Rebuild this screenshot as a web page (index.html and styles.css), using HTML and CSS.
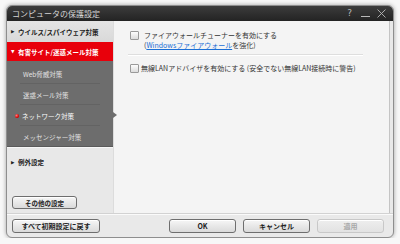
FILE: index.html
```html
<!DOCTYPE html>
<html lang="ja">
<head>
  <meta charset="UTF-8">
  <title>コンピュータの保護設定</title>
  <link rel="stylesheet" href="styles.css">
</head>
<body>
  <div class="window">
    <div class="titlebar">
      <span class="title">コンピュータの保護設定</span>
      <div class="controls">
        <span class="help">?</span>
        <svg class="ctl" width="9" height="9" viewBox="0 0 9 9"><line x1="0" y1="7.5" x2="9" y2="7.5" stroke="#b8b8b8" stroke-width="1"/></svg>
        <svg class="ctl" width="9" height="9" viewBox="0 0 9 9"><path d="M0.5 0.5 L8.5 8.5 M8.5 0.5 L0.5 8.5" stroke="#b8b8b8" stroke-width="0.9" fill="none"/></svg>
      </div>
    </div>

    <div class="main">
      <div class="sidebar">
        <div class="menu-item top"><span class="tri">&#9654;</span>ウイルス/スパイウェア対策</div>
        <div class="menu-item open"><span class="tri">&#9660;</span>有害サイト/迷惑メール対策</div>
        <div class="submenu">
          <div class="sub-item">Web脅威対策</div>
          <div class="sub-item">迷惑メール対策</div>
          <div class="sub-item selected"><span class="dot"></span>ネットワーク対策</div>
          <div class="sub-item last">メッセンジャー対策</div>
        </div>
        <div class="menu-item plain"><span class="tri">&#9654;</span>例外設定</div>
        <div class="sidebar-bottom">
          <button class="btn btn-small">その他の設定</button>
        </div>
      </div>

      <div class="content">
        <div class="option">
          <span class="checkbox"></span>
          <div class="option-text">
            ファイアウォールチューナーを有効にする<br>
            (<a href="#">Windowsファイアウォール</a>を強化)
          </div>
        </div>
        <div class="divider"></div>
        <div class="option tight">
          <span class="checkbox"></span>
          <div class="option-text">無線LANアドバイザを有効にする (安全でない無線LAN接続時に警告)</div>
        </div>
      </div>
    </div>

    <div class="footer">
      <button class="btn btn-reset">すべて初期設定に戻す</button>
      <div class="spacer"></div>
      <button class="btn btn-dialog">OK</button>
      <button class="btn btn-dialog">キャンセル</button>
      <button class="btn btn-dialog disabled">適用</button>
    </div>
  </div>
</body>
</html>
```

FILE: styles.css
```css
body {
  margin: 0;
  background-color: #f7f7f7;
  font-family: "Noto Sans CJK JP", "Liberation Sans", sans-serif;
}
.window {
  margin: 5px 0 0 6px;
  width: 386px;
  height: 231px;
  border: 1px solid #8e8e8e;
  border-radius: 6px;
  background-color: #e9e9e9;
  box-shadow: 0 0 4px rgba(0, 0, 0, 0.35);
  overflow: hidden;
  display: flex;
  flex-direction: column;
}
.titlebar {
  height: 15px;
  flex: none;
  background: linear-gradient(#3c3c3c, #232323);
  display: flex;
  align-items: center;
  padding-left: 5px;
}
.title {
  color: #d4d4d4;
  font-size: 8px;
  line-height: 1;
}
.controls {
  margin-left: auto;
  display: flex;
  align-items: center;
  gap: 7px;
  margin-right: 7px;
}
.help {
  color: #b8b8b8;
  font-family: "DejaVu Sans", sans-serif;
  font-size: 9px;
  line-height: 1;
  margin-right: 2px;
}
.ctl {
  display: block;
}
.main {
  height: 192px;
  flex: none;
  display: flex;
}
.sidebar {
  width: 106px;
  flex: none;
  display: flex;
  flex-direction: column;
  background-color: #e8e8e8;
  border-right: 1px solid #dcdcdc;
}
.menu-item {
  display: flex;
  align-items: center;
  font-size: 6.5px;
  font-weight: bold;
  color: #222;
  padding-left: 4px;
}
.menu-item .tri {
  font-family: "DejaVu Sans", sans-serif;
  font-size: 4.5px;
  width: 7px;
}
.menu-item.top {
  height: 21px;
  background: linear-gradient(#e4e4e4, #d9d9d9);
}
.menu-item.open {
  height: 19px;
  background-color: #e8000b;
  color: #fff;
}
.menu-item.plain {
  height: 29px;
  border-top: 1px solid #f6f6f6;
  box-sizing: border-box;
}
.submenu {
  background-color: #6d6d6d;
  padding-top: 2px;
  box-shadow: inset 0 -1px 0 #5a5a5a;
}
.sub-item {
  position: relative;
  height: 21px;
  display: flex;
  align-items: center;
  padding-left: 16px;
  font-size: 6.5px;
  color: #e2e2e2;
  background: linear-gradient(#636363, #636363) no-repeat 13px 100% / 80px 1px;
}
.sub-item.last {
  background: none;
}
.sub-item.selected {
  color: #fff;
  padding-left: 8px;
}
.sub-item.selected::after {
  content: "";
  position: absolute;
  right: -4px;
  top: 7px;
  border-left: 4px solid #6d6d6d;
  border-top: 3.5px solid transparent;
  border-bottom: 3.5px solid transparent;
}
.dot {
  width: 4px;
  height: 4px;
  border-radius: 50%;
  background: radial-gradient(circle at 35% 35%, #ff8080, #e00000 60%, #a00000);
  margin-right: 3px;
}
.sidebar-bottom {
  margin-top: auto;
  padding: 0 0 4px 5px;
}
.btn {
  font-family: "Noto Sans CJK JP", "Liberation Sans", sans-serif;
  font-weight: bold;
  color: #222;
  background: linear-gradient(#f6f6f6, #dadada);
  border: 1px solid #6e6e6e;
  border-radius: 3px;
  padding: 0;
  box-sizing: border-box;
  box-shadow: inset 0 1px 0 #fff;
}
.btn-small {
  width: 65px;
  height: 13px;
  font-size: 6.5px;
  display: block;
}
.content {
  flex: 1;
  background-color: #f4f4f4;
  margin-right: 3px;
  border-right: 1px solid #c4c4c4;
  padding: 9px 0 0 16px;
}
.option {
  display: flex;
  align-items: flex-start;
  font-size: 7px;
  color: #333;
  line-height: 10px;
}
.checkbox {
  width: 7px;
  height: 7px;
  flex: none;
  border: 1px solid #9a9a9a;
  border-radius: 1px;
  background: linear-gradient(#fdfdfd, #dcdcdc);
  margin: 1px 5px 0 0;
}
.option.tight .checkbox {
  margin-right: 2px;
}
.option-text a {
  color: #1b6fd6;
  text-decoration: underline;
}
.divider {
  width: 235px;
  height: 1px;
  background-color: #dedede;
  border-bottom: 1px solid #fff;
  margin: 4px 0 7px -2px;
}
.footer {
  flex: 1;
  border-top: 1px solid #d2d2d2;
  box-shadow: inset 0 1px 0 #fafafa;
  display: flex;
  align-items: flex-start;
  padding: 5px 9px 0 5px;
  gap: 7px;
}
.spacer {
  flex: 1;
}
.btn-reset {
  width: 88px;
  height: 14px;
  font-size: 7px;
}
.btn-dialog {
  width: 67px;
  height: 14px;
  font-size: 7px;
}
.btn-dialog.disabled {
  color: #a8a8a8;
  border-color: #c8c8c8;
  background: linear-gradient(#eeeeee, #e2e2e2);
}
```
